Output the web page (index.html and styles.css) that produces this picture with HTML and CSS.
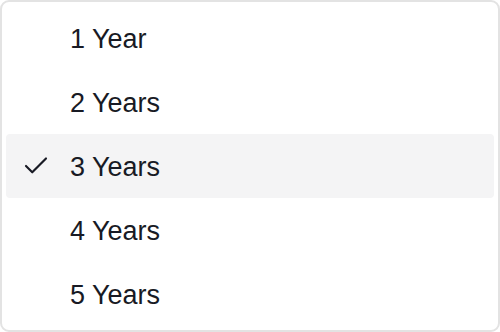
FILE: index.html
```html
<!DOCTYPE html>
<html>
<head>
<meta charset="utf-8">
<link rel="stylesheet" href="styles.css">
</head>
<body>
<div class="menu">
  <div class="item"><span class="icon"></span><span class="label">1 Year</span></div>
  <div class="item"><span class="icon"></span><span class="label">2 Years</span></div>
  <div class="item selected"><span class="icon"><svg viewBox="0 0 24 24" width="30" height="30" fill="none" stroke="currentColor" stroke-width="1.7" stroke-linecap="round" stroke-linejoin="round"><path d="M20 6 9 17l-5-5"/></svg></span><span class="label">3 Years</span></div>
  <div class="item"><span class="icon"></span><span class="label">4 Years</span></div>
  <div class="item"><span class="icon"></span><span class="label">5 Years</span></div>
</div>
</body>
</html>
```
FILE: styles.css
```css
html, body {
  margin: 0;
  padding: 0;
  background: #ffffff;
}
.menu {
  box-sizing: border-box;
  width: 500px;
  height: 332px;
  border: 2px solid #e3e3e3;
  border-radius: 9px;
  padding: 4px;
  background: #ffffff;
  font-family: "Liberation Sans", Arial, sans-serif;
  color: #181a24;
  display: flex;
  flex-direction: column;
}
.item {
  height: 64px;
  display: flex;
  align-items: center;
  padding-left: 15px;
  gap: 19px;
  border-radius: 4px;
}
.item.selected {
  background: #f4f4f5;
}
.icon {
  width: 30px;
  height: 30px;
  display: flex;
  color: #181a24;
}
.label {
  font-size: 27px;
  line-height: 1;
  padding-top: 3px;
}
```
